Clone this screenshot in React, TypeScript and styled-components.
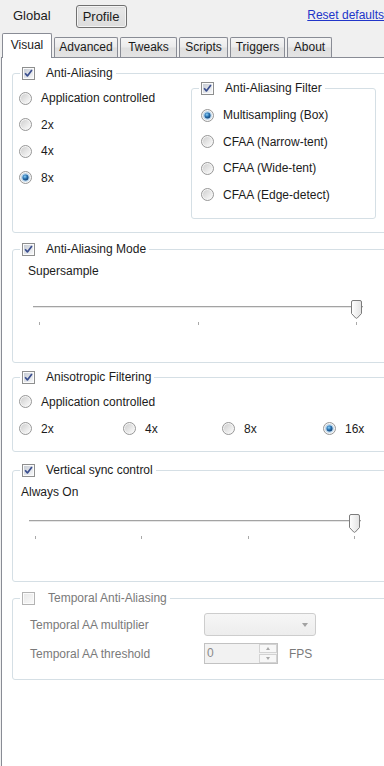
import React, { useId } from "react";
import styled, { createGlobalStyle } from "styled-components";

const GlobalStyle = createGlobalStyle`
  html, body { margin: 0; padding: 0; }
  body {
    width: 384px;
    height: 766px;
    overflow: hidden;
    background: #ffffff;
    font-family: "Liberation Sans", Arial, sans-serif;
    font-size: 12px;
    color: #1b1b1b;
  }
  *, *::before, *::after { box-sizing: border-box; }
`;

const Window = styled.div`
  width: 384px;
  height: 766px;
  overflow: hidden;
  display: flex;
  flex-direction: column;
  background: #f0f0f0;
`;

const TopBar = styled.div`
  flex: none;
  height: 33px;
  display: flex;
  align-items: center;
  padding: 0 0 1px 13px;
`;

const ScopeLabel = styled.span`
  font-size: 13px;
  line-height: 16px;
  color: #1b1b1b;
`;

const ScopeButton = styled.button`
  flex: none;
  margin-left: 25px;
  width: 51px;
  height: 23px;
  padding: 0;
  font-family: inherit;
  font-size: 13px;
  color: #1b1b1b;
  border: 1px solid #707070;
  border-radius: 3px;
  background: linear-gradient(#e8e8e8, #dcdcdc);
  box-shadow: inset 0 0 0 1px #f4f4f4, inset 1px 1px 2px rgba(0, 0, 0, 0.15);
`;

const ResetLink = styled.a`
  flex: none;
  margin: 0 0 2px auto;
  white-space: nowrap;
  color: #2135c9;
  text-decoration: underline;
  font-size: 12px;
  line-height: 14px;
  cursor: pointer;
`;

const TabStrip = styled.div`
  flex: none;
  height: 24px;
  display: flex;
  align-items: flex-end;
  gap: 2px;
  padding-left: 2px;
  position: relative;
  z-index: 1;
`;

const Tab = styled.div<{ $w: number; $active?: boolean }>`
  flex: none;
  width: ${(p) => p.$w}px;
  height: ${(p) => (p.$active ? 25 : 20)}px;
  margin-bottom: ${(p) => (p.$active ? -1 : 0)}px;
  padding-bottom: ${(p) => (p.$active ? 3 : 1)}px;
  display: flex;
  align-items: center;
  justify-content: center;
  border: 1px solid #898c95;
  border-bottom: none;
  border-radius: 2px 2px 0 0;
  background: ${(p) =>
    p.$active
      ? "#ffffff"
      : "linear-gradient(#f5f5f5, #ebebeb 48%, #dfdfdf 52%, #e4e4e4)"};
  font-size: 12px;
  color: #1b1b1b;
  white-space: nowrap;
`;

const Panel = styled.div`
  flex: 1;
  width: 430px;
  margin-left: 1px;
  background: #ffffff;
  border-top: 1px solid #898c95;
  border-left: 1px solid #898c95;
  padding: 0 20px 0 10px;
  display: flex;
  flex-direction: column;
`;

const Group = styled.fieldset<{ $h: number; $mt?: number; $w?: number }>`
  flex: none;
  margin: ${(p) => p.$mt ?? 0}px 0 0 0;
  padding: 0;
  height: ${(p) => p.$h}px;
  ${(p) => (p.$w ? `width: ${p.$w}px;` : "")}
  min-width: 0;
  border: 1px solid #d5dfe5;
  border-radius: 3px;
`;

const Legend = styled.legend<{ $disabled?: boolean; $gap?: number }>`
  margin-left: 7px;
  padding: 0 3px 0 2px;
  height: 15px;
  display: flex;
  align-items: center;
  gap: ${(p) => p.$gap ?? 11}px;
  line-height: 15px;
  font-size: 12px;
  white-space: nowrap;
  color: ${(p) => (p.$disabled ? "#7a7a7a" : "#1b1b1b")};
`;

const Body = styled.div<{ $pt: number; $pl: number }>`
  padding: ${(p) => p.$pt}px 0 0 ${(p) => p.$pl}px;
  display: flex;
  flex-direction: column;
  align-items: flex-start;
`;

const SplitBody = styled.div`
  display: flex;
  align-items: flex-start;
`;

const RadioList = styled.div<{ $pt: number; $pl: number; $w?: number }>`
  flex: none;
  ${(p) => (p.$w ? `width: ${p.$w}px;` : "")}
  padding: ${(p) => p.$pt}px 0 0 ${(p) => p.$pl}px;
  display: flex;
  flex-direction: column;
`;

const RadioRow = styled.div<{ $h?: number }>`
  height: ${(p) => p.$h ?? 26.5}px;
  display: flex;
  align-items: center;
  gap: 9px;
  white-space: nowrap;
`;

const RadioGrid = styled.div`
  display: grid;
  grid-template-columns: 104px 99px 101px 101px;
`;

const ValueLabel = styled.span`
  line-height: 14px;
  white-space: nowrap;
`;

const SliderBox = styled.div<{ $w: number; $ml: number; $mt: number }>`
  position: relative;
  flex: none;
  width: ${(p) => p.$w}px;
  margin: ${(p) => p.$mt}px 0 0 ${(p) => p.$ml}px;
  padding-top: 6px;
`;

const Track = styled.div`
  height: 2px;
  border-top: 1px solid #a3a3a3;
  border-bottom: 1px solid #e6e6e6;
`;

const TickRow = styled.div`
  margin-top: 14px;
  height: 3px;
  padding: 0 6px;
  display: flex;
  justify-content: space-between;
`;

const Tick = styled.span`
  width: 1px;
  height: 3px;
  background: #a9a9a9;
`;

const ThumbSvg = styled.svg`
  position: absolute;
  top: 0;
  display: block;
`;

const BoxSvg = styled.svg`
  flex: none;
  display: block;
`;

const FormGrid = styled.div`
  display: grid;
  grid-template-columns: 174px auto;
  row-gap: 7px;
  align-items: center;
`;

const FieldLabel = styled.span`
  color: #7a7a7a;
  white-space: nowrap;
  line-height: 14px;
`;

const Combo = styled.div`
  width: 112px;
  height: 23px;
  border: 1px solid #cdcdcd;
  border-radius: 3px;
  background: linear-gradient(#f6f6f6, #ededed);
  display: flex;
  align-items: center;
  justify-content: flex-end;
  padding: 1px 7px 0 0;
`;

const ComboArrow = styled.span`
  width: 0;
  height: 0;
  border-left: 3.5px solid transparent;
  border-right: 3.5px solid transparent;
  border-top: 4px solid #a2a2a2;
`;

const SpinRow = styled.div`
  display: flex;
  align-items: center;
  gap: 11px;
`;

const Spin = styled.div`
  width: 74px;
  height: 21px;
  display: flex;
  border: 1px solid #c2c2c2;
  background: #f2f2f2;
`;

const SpinValue = styled.span`
  flex: 1;
  padding-left: 2px;
  line-height: 19px;
  font-size: 12px;
  color: #8a8a8a;
`;

const SpinButtons = styled.div`
  width: 18px;
  display: flex;
  flex-direction: column;
  gap: 1px;
  padding: 0;
`;

const SpinButton = styled.div<{ $up?: boolean }>`
  flex: 1;
  display: flex;
  align-items: center;
  justify-content: center;
  border: 1px solid #d3d3d3;
  background: #f7f7f7;
  &::after {
    content: "";
    width: 0;
    height: 0;
    border-left: 2.5px solid transparent;
    border-right: 2.5px solid transparent;
    ${(p) =>
      p.$up
        ? "border-bottom: 3px solid #a8a8a8;"
        : "border-top: 3px solid #a8a8a8;"}
  }
`;

function useSvgId(prefix: string) {
  return prefix + useId().replace(/[^a-zA-Z0-9]/g, "");
}

function CheckBox({ checked, disabled }: { checked?: boolean; disabled?: boolean }) {
  const gid = useSvgId("cb");
  return (
    <BoxSvg width="13" height="13" viewBox="0 0 13 13">
      <defs>
        <linearGradient id={gid} x1="0" y1="0" x2="1" y2="1">
          <stop offset="0" stopColor={disabled ? "#e9e9e9" : "#c7ccd4"} />
          <stop offset="1" stopColor={disabled ? "#f8f8f8" : "#f6f7f9"} />
        </linearGradient>
      </defs>
      <rect x="0.5" y="0.5" width="12" height="12" fill="#fbfbfb" stroke={disabled ? "#b3b3b3" : "#8e8f8f"} />
      <rect x="2" y="2" width="9" height="9" fill={`url(#${gid})`} />
      {checked && (
        <path d="M3.1 6.2 L5.4 8.9 L9.9 2.9" fill="none" stroke="#3b4f8f" strokeWidth="1.7" strokeLinejoin="round" />
      )}
    </BoxSvg>
  );
}

function Radio({ checked }: { checked?: boolean }) {
  const oid = useSvgId("ro");
  const did = useSvgId("rd");
  return (
    <BoxSvg width="13" height="13" viewBox="0 0 13 13">
      <defs>
        <linearGradient id={oid} x1="0" y1="0" x2="1" y2="1">
          <stop offset="0" stopColor="#cfcfcf" />
          <stop offset="1" stopColor="#fbfbfb" />
        </linearGradient>
        <radialGradient id={did} cx="0.4" cy="0.35" r="0.7">
          <stop offset="0" stopColor="#8fd0f5" />
          <stop offset="0.5" stopColor="#2a74b3" />
          <stop offset="1" stopColor="#10396a" />
        </radialGradient>
      </defs>
      <circle cx="6.5" cy="6.5" r="6" fill="#f5f5f5" stroke="#979797" />
      <circle cx="6.5" cy="6.5" r="4.6" fill={`url(#${oid})`} />
      {checked && (
        <>
          <circle cx="6.5" cy="6.5" r="4.3" fill="#b6d6ef" />
          <circle cx="6.5" cy="6.5" r="3" fill={`url(#${did})`} />
        </>
      )}
    </BoxSvg>
  );
}

function Slider({ w, ml, mt, ticks, value }: { w: number; ml: number; mt: number; ticks: number; value: number }) {
  const gid = useSvgId("th");
  const frac = value / (ticks - 1);
  const left = Math.round(frac * (w - 13) + 1);
  return (
    <SliderBox $w={w} $ml={ml} $mt={mt}>
      <Track />
      <TickRow>
        {Array.from({ length: ticks }).map((_, i) => (
          <Tick key={i} />
        ))}
      </TickRow>
      <ThumbSvg width="11" height="19" viewBox="0 0 11 19" style={{ left }}>
        <defs>
          <linearGradient id={gid} x1="0" y1="0" x2="1" y2="0">
            <stop offset="0" stopColor="#ffffff" />
            <stop offset="1" stopColor="#e2e2e2" />
          </linearGradient>
        </defs>
        <path
          d="M2 0.5 H9 Q10.5 0.5 10.5 2 V13.5 L6.3 18 Q5.5 18.7 4.7 18 L0.5 13.5 V2 Q0.5 0.5 2 0.5 Z"
          fill={`url(#${gid})`}
          stroke="#7c7c7c"
        />
      </ThumbSvg>
    </SliderBox>
  );
}

const tabs = [
  { label: "Visual", w: 50, active: true },
  { label: "Advanced", w: 64 },
  { label: "Tweaks", w: 57 },
  { label: "Scripts", w: 49 },
  { label: "Triggers", w: 55 },
  { label: "About", w: 45 },
];

const aaModes = ["Application controlled", "2x", "4x", "8x"];
const aaFilters = ["Multisampling (Box)", "CFAA (Narrow-tent)", "CFAA (Wide-tent)", "CFAA (Edge-detect)"];
const afLevels = ["2x", "4x", "8x", "16x"];

export default function App() {
  return (
    <>
      <GlobalStyle />
      <Window>
        <TopBar>
          <ScopeLabel>Global</ScopeLabel>
          <ScopeButton>Profile</ScopeButton>
          <ResetLink>Reset defaults</ResetLink>
        </TopBar>
        <TabStrip>
          {tabs.map((t) => (
            <Tab key={t.label} $w={t.w} $active={t.active}>
              {t.label}
            </Tab>
          ))}
        </TabStrip>
        <Panel>
          <Group $h={167} $mt={8}>
            <Legend>
              <CheckBox checked />
              Anti-Aliasing
            </Legend>
            <SplitBody>
              <RadioList $pt={4} $pl={6} $w={178}>
                {aaModes.map((m) => (
                  <RadioRow key={m}>
                    <Radio checked={m === "8x"} />
                    {m}
                  </RadioRow>
                ))}
              </RadioList>
              <Group $h={138} $w={185}>
                <Legend>
                  <CheckBox checked />
                  Anti-Aliasing Filter
                </Legend>
                <RadioList $pt={6} $pl={9}>
                  {aaFilters.map((f, i) => (
                    <RadioRow key={f}>
                      <Radio checked={i === 0} />
                      {f}
                    </RadioRow>
                  ))}
                </RadioList>
              </Group>
            </SplitBody>
          </Group>

          <Group $h={121} $mt={9}>
            <Legend>
              <CheckBox checked />
              Anti-Aliasing Mode
            </Legend>
            <Body $pt={7} $pl={15}>
              <ValueLabel>Supersample</ValueLabel>
              <Slider w={330} ml={5} mt={22} ticks={3} value={2} />
            </Body>
          </Group>

          <Group $h={82} $mt={7}>
            <Legend>
              <CheckBox checked />
              Anisotropic Filtering
            </Legend>
            <Body $pt={3} $pl={6}>
              <RadioRow $h={27}>
                <Radio />
                Application controlled
              </RadioRow>
              <RadioGrid>
                {afLevels.map((l) => (
                  <RadioRow key={l} $h={27}>
                    <Radio checked={l === "16x"} />
                    {l}
                  </RadioRow>
                ))}
              </RadioGrid>
            </Body>
          </Group>

          <Group $h={119} $mt={11}>
            <Legend>
              <CheckBox checked />
              Vertical sync control
            </Legend>
            <Body $pt={7} $pl={8}>
              <ValueLabel>Always On</ValueLabel>
              <Slider w={332} ml={8} mt={15} ticks={4} value={3} />
            </Body>
          </Group>

          <Group $h={89} $mt={9}>
            <Legend $disabled $gap={13}>
              <CheckBox disabled />
              Temporal Anti-Aliasing
            </Legend>
            <Body $pt={7} $pl={17}>
              <FormGrid>
                <FieldLabel>Temporal AA multiplier</FieldLabel>
                <Combo>
                  <ComboArrow />
                </Combo>
                <FieldLabel>Temporal AA threshold</FieldLabel>
                <SpinRow>
                  <Spin>
                    <SpinValue>0</SpinValue>
                    <SpinButtons>
                      <SpinButton $up />
                      <SpinButton />
                    </SpinButtons>
                  </Spin>
                  <FieldLabel>FPS</FieldLabel>
                </SpinRow>
              </FormGrid>
            </Body>
          </Group>
        </Panel>
      </Window>
    </>
  );
}
